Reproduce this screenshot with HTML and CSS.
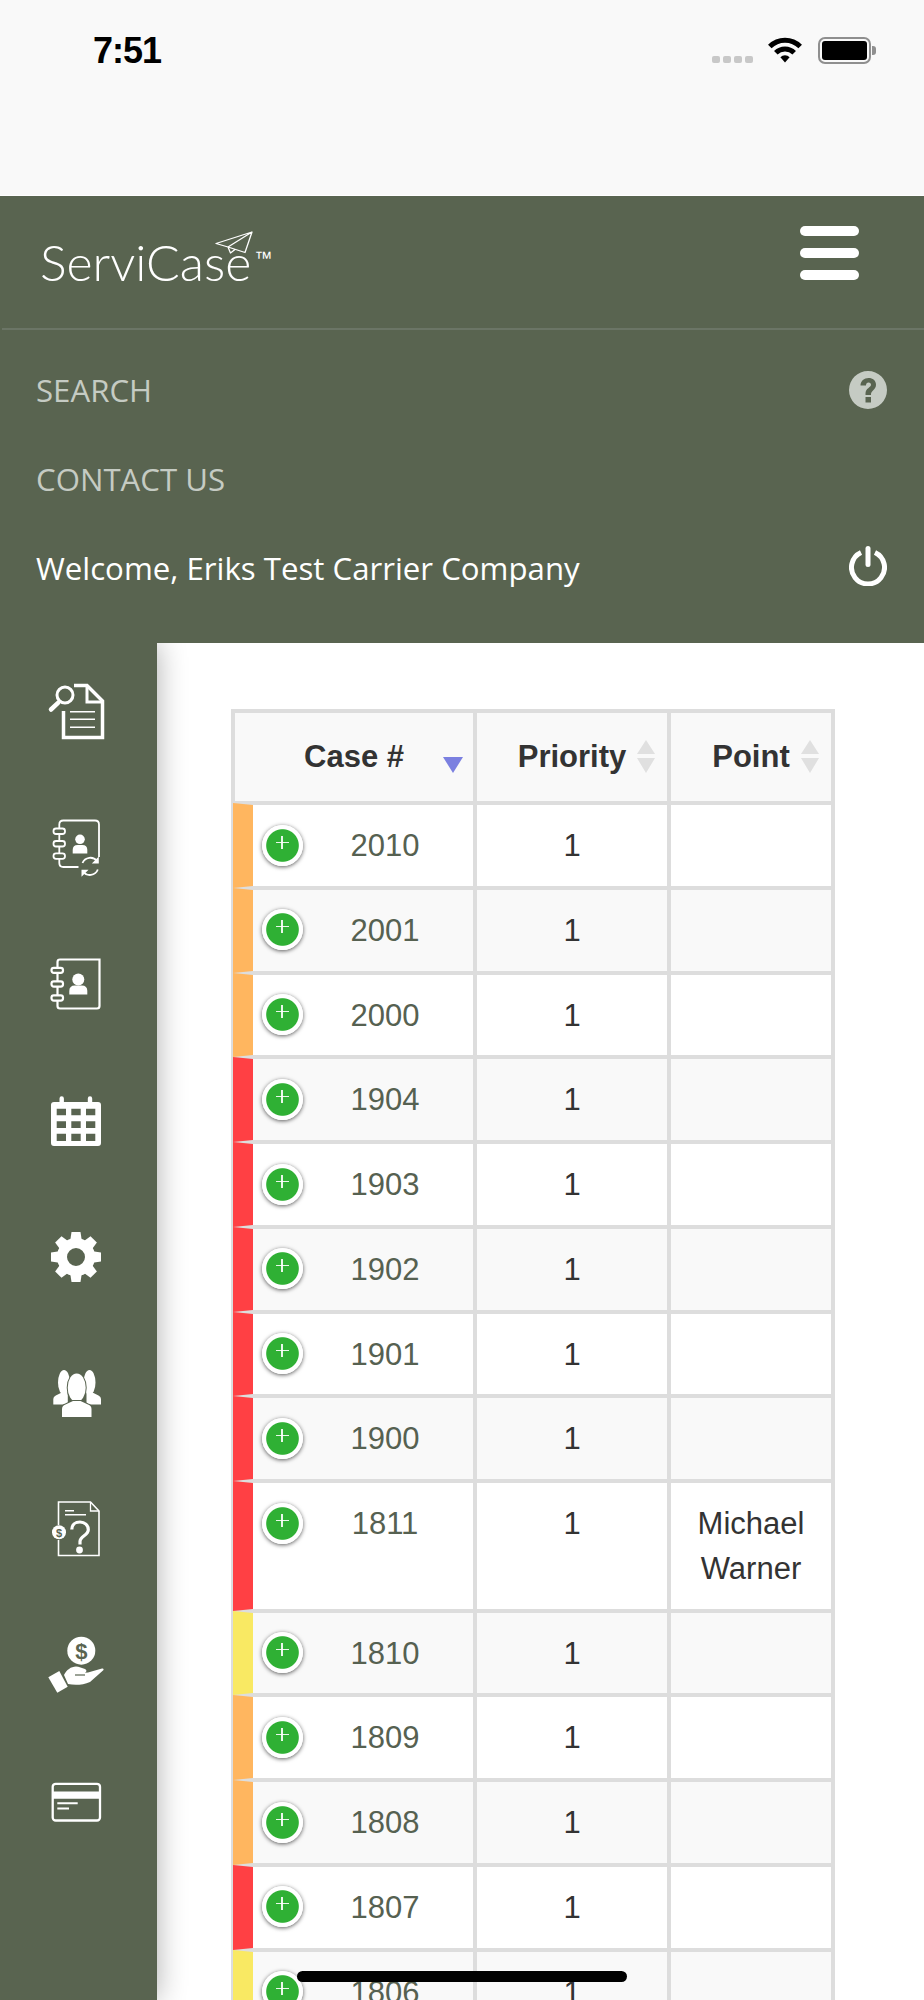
FILE: index.html
```html
<!DOCTYPE html>
<html lang="en">
<head>
<meta charset="utf-8">
<title>ServiCase</title>
<link rel="stylesheet" href="styles.css">
</head>
<body>
<div class="status">
  <span class="time">7:51</span>
  <div class="status-right">
    <div class="signal"><i></i><i></i><i></i><i></i></div>
    <svg class="wifi" viewBox="0 0 36 26"><path d="M2.800 9.600a21.500 21.500 0 0 1 30.400 0" fill="none" stroke="#000" stroke-width="5"/><path d="M8.800 15.800a13 13 0 0 1 18.400 0" fill="none" stroke="#000" stroke-width="5"/><path d="M13.400 20.200a6.500 6.500 0 0 1 9.200 0L18 25.500z" fill="#000"/></svg>
    <div class="battery"><div class="battery-fill"></div></div>
    <div class="battery-nub"></div>
  </div>
</div>

<header class="topbar">
  <div class="brand">
    <span class="logo">ServiCase</span><span class="tm">™</span>
    <svg class="plane" viewBox="0 0 38 23"><path d="M37 1 1 12.500l12 3.500 17 5.500zM37 1 13 16M13 16l2.500 6L20 18.500" fill="none" stroke="#fff" stroke-width="1.300" stroke-linejoin="round"/></svg>
  </div>
  <div class="burger"><i></i><i></i><i></i></div>
</header>
<div class="divider"></div>
<nav class="nav">
  <div class="nav-row muted"><span>SEARCH</span>
    <svg class="nav-icon" viewBox="0 0 38 38"><path fill-rule="evenodd" d="M19 0a19 19 0 1 1 0 38 19 19 0 0 1 0-38zM16.500 26v5.500h5.500v-5.500zM11.500 14.500h5.500c0-2 1-3 2.600-3 1.500 0 2.400 1 2.400 2.200 0 2.800-5.500 3.300-5.500 8.800v1.500h5.500v-1c0-3.300 5-4.300 5-9.300 0-4-3.300-6.700-7.400-6.700-4.500 0-8.100 3-8.100 7.500z" fill="#c5cbc3"/></svg>
  </div>
  <div class="nav-row muted"><span>CONTACT US</span></div>
  <div class="nav-row"><span>Welcome, Eriks Test Carrier Company</span>
    <svg class="nav-icon nav-power" viewBox="0 0 38 40"><path d="M12 6.500a16.500 16.500 0 1 0 14 0" fill="none" stroke="#fff" stroke-width="5"/><path d="M19 2.500v16" stroke="#fff" stroke-width="5" stroke-linecap="round"/></svg>
  </div>
</nav>

<div class="main">
  <aside class="sidebar">
    <div class="side-item"><svg class="side-icon" viewBox="0 0 60 60"><g fill="none" stroke="#fff"><path d="M28 3.500H41L56.500 19V55.500H17.500V29" stroke-width="3.500"/><path d="M41 3.500V20H56.500" stroke-width="3"/><path d="M24 29.700H49M24 37.300H49M24 45.300H49" stroke-width="1.600"/><circle cx="19" cy="13" r="8" stroke-width="3"/><path d="M12.300 20.700 5 27.500" stroke-width="4.500" stroke-linecap="round"/></g></svg></div>
    <div class="side-item"><svg class="side-icon" viewBox="0 0 60 60"><g fill="none" stroke="#fff" stroke-width="1.800"><path d="M13.300 10V6.500q0-4 4-4H49q4 0 4 4V39M13.300 41v4q0 4 4 4H32.500M13.300 16v7M13.300 28.500v7"/><rect x="7.500" y="10.500" width="11.500" height="5.500" rx="2.500"/><rect x="7.500" y="23" width="11.500" height="5.500" rx="2.500"/><rect x="7.500" y="35.300" width="11.500" height="5.500" rx="2.500"/><path d="M36.500 45a8.500 8.500 0 0 1 14.500-2M51.800 51.500a8.500 8.500 0 0 1-14.800 2"/></g><path d="M52.800 38.500v7h-7zM35.500 58.800v-7h7z" fill="#fff"/><circle cx="34" cy="21.300" r="4.800" fill="#fff"/><path d="M26.700 35.500v-3.500q0-5 5-5h4.600q5 0 5 5v3.500z" fill="#fff"/></svg></div>
    <div class="side-item"><svg class="side-icon" viewBox="0 0 60 60"><g fill="none" stroke="#fff" stroke-width="2.200"><path d="M11.500 13.500V8q0-2.500 2.500-2.500H53.500V52q0 2.500-2.500 2.500H14q-2.500 0-2.500-2.500V46.500M11.500 19v8M11.500 33v8"/><rect x="5.500" y="13.800" width="11.500" height="5" rx="2.300"/><rect x="5.500" y="27.300" width="11.500" height="5.300" rx="2.300"/><rect x="5.500" y="41.300" width="11.500" height="5.300" rx="2.300"/></g><circle cx="32.300" cy="25.500" r="6" fill="#fff"/><path d="M23.300 40.500v-3.500q0-5.500 5.500-5.500h7q5.500 0 5.500 5.500v3.500z" fill="#fff"/></svg></div>
    <div class="side-item"><svg class="side-icon" viewBox="0 0 60 60"><path fill="#fff" fill-rule="evenodd" d="M13.500 11V7.500a2.200 2.200 0 0 1 4.400 0V11H41.800V7.500a2.200 2.200 0 0 1 4.400 0V11H52a3 3 0 0 1 3 3V52a3 3 0 0 1-3 3H8a3 3 0 0 1-3-3V14a3 3 0 0 1 3-3zM10.700 17.700v6.600H20v-6.600zM25.300 17.700v6.600H34.700v-6.600zM40 17.700v6.600H49.300v-6.600zM10.700 30.300V37H20V30.300zM25.300 30.300V37H34.700V30.300zM40 30.300V37H49.300V30.300zM10.700 42.700V50H20V42.700zM25.300 42.700V50H34.700V42.700zM40 42.700V50H49.300V42.700z"/></svg></div>
    <div class="side-item"><svg class="side-icon" viewBox="0 0 60 60"><g fill="#fff"><path d="M25.500 5h9l1.500 10H24z"/><path d="M25.500 5h9l1.500 10H24z" transform="rotate(45 30 30)"/><path d="M25.500 5h9l1.500 10H24z" transform="rotate(90 30 30)"/><path d="M25.500 5h9l1.500 10H24z" transform="rotate(135 30 30)"/><path d="M25.500 5h9l1.500 10H24z" transform="rotate(180 30 30)"/><path d="M25.500 5h9l1.500 10H24z" transform="rotate(225 30 30)"/><path d="M25.500 5h9l1.500 10H24z" transform="rotate(270 30 30)"/><path d="M25.500 5h9l1.500 10H24z" transform="rotate(315 30 30)"/></g><circle cx="30" cy="30" r="14" fill="none" stroke="#fff" stroke-width="10"/></svg></div>
    <div class="side-item"><svg class="side-icon" viewBox="0 0 60 60"><g fill="#fff"><ellipse cx="18" cy="19.500" rx="6" ry="12.500"/><path d="M7.300 41.500V36q0-2.500 2.500-3.500l6-3h6v12z"/><ellipse cx="43.500" cy="19.500" rx="6" ry="12.500"/><path d="M55 41.500V36q0-2.500-2.500-3.500l-6-3h-6v12z"/></g><g fill="#fff" class="sep"><ellipse cx="30.700" cy="24.700" rx="9" ry="14.300"/><path d="M16 54V46q0-3.500 3.500-4.500l7.500-3.500h7.500l7.500 3.500q3.500 1 3.500 4.500v8z"/></g></svg></div>
    <div class="side-item"><svg class="side-icon" viewBox="0 0 60 60"><g fill="none" stroke="#fff"><path d="M12.500 26V3H44.500L53 12V56.500H12.500V41" stroke-width="1.600"/><path d="M44.500 3V12H53" stroke-width="1.300"/><path d="M19 11.700H28M19 15.700H40" stroke-width="1.500"/><path d="M25.800 30.500c0-4.800 3.600-7.500 8.200-7.500s8.300 3 8.300 7.800c0 5.700-8.300 6.200-8.300 11.700v3" stroke-width="3.200"/></g><circle cx="33.500" cy="51" r="3.400" fill="#fff"/><circle cx="13" cy="33.300" r="7" fill="#fff"/><text class="coin-s" x="13" y="37.500">$</text></svg></div>
    <div class="side-item"><svg class="side-icon" viewBox="0 0 60 60"><circle cx="35.300" cy="15.700" r="14" fill="#fff"/><text class="coin-l" x="35.300" y="23.500">$</text><path d="M2.300 42.300 13.300 36l8.400 15.700-10.400 6z" fill="#fff"/><path d="M18 40c2.500-5 7-8.500 12-8.500 3 0 6 1.500 9 2.500 2 1 2 3.200-.5 3.700L42 37.500l14-4c1.500-.5 2.200 1 1 2L44 47c-7 3-15 3.500-22 2z" fill="#fff"/><path d="M29 40H39" class="hand-line"/></svg></div>
    <div class="side-item"><svg class="side-icon" viewBox="0 0 60 60"><rect x="6.700" y="11.800" width="47.300" height="36.700" rx="3" fill="none" stroke="#fff" stroke-width="2.300"/><path d="M6 19.500H55V26.800H6z" fill="#fff"/><path d="M11.300 31.200H31.700M11.300 36.500H23" stroke="#fff" stroke-width="2"/></svg></div>
  </aside>

  <section class="content">
    <table class="cases">
      <colgroup><col class="col-case"><col class="col-prio"><col class="col-point"></colgroup>
      <thead>
        <tr>
          <th>Case #<span class="sort-active"></span></th>
          <th>Priority<span class="sort"></span></th>
          <th>Point<span class="sort"></span></th>
        </tr>
      </thead>
      <tbody>
        <tr><td class="case orange"><span class="expand"></span>2010</td><td>1</td><td></td></tr>
        <tr><td class="case orange"><span class="expand"></span>2001</td><td>1</td><td></td></tr>
        <tr><td class="case orange"><span class="expand"></span>2000</td><td>1</td><td></td></tr>
        <tr><td class="case red"><span class="expand"></span>1904</td><td>1</td><td></td></tr>
        <tr><td class="case red"><span class="expand"></span>1903</td><td>1</td><td></td></tr>
        <tr><td class="case red"><span class="expand"></span>1902</td><td>1</td><td></td></tr>
        <tr><td class="case red"><span class="expand"></span>1901</td><td>1</td><td></td></tr>
        <tr><td class="case red"><span class="expand"></span>1900</td><td>1</td><td></td></tr>
        <tr><td class="case red"><span class="expand"></span>1811</td><td>1</td><td>Michael Warner</td></tr>
        <tr><td class="case yellow"><span class="expand"></span>1810</td><td>1</td><td></td></tr>
        <tr><td class="case orange"><span class="expand"></span>1809</td><td>1</td><td></td></tr>
        <tr><td class="case orange"><span class="expand"></span>1808</td><td>1</td><td></td></tr>
        <tr><td class="case red"><span class="expand"></span>1807</td><td>1</td><td></td></tr>
        <tr><td class="case yellow"><span class="expand"></span>1806</td><td>1</td><td></td></tr>
      </tbody>
    </table>
  </section>
</div>
<div class="home-indicator"></div>
</body>
</html>
```
FILE: styles.css
```css
* { box-sizing: border-box; }
html, body { margin: 0; padding: 0; }
body {
  height: 2000px;
  overflow: hidden;
  position: relative;
  background: #fff;
  font-family: "Liberation Sans", Arial, sans-serif;
  color: #333;
}

/* status bar */
.status {
  height: 196px;
  background: #f9f9f9;
  border-bottom: 1px solid #fff;
  display: flex;
  justify-content: space-between;
  align-items: flex-start;
  padding: 31px 48px 0 93px;
}
.time {
  font-size: 36px;
  line-height: 40px;
  font-weight: 700;
  letter-spacing: -1px;
  color: #000;
}
.status-right { display: flex; align-items: flex-start; padding-top: 6px; }
.signal { display: flex; gap: 3px; margin-top: 19px; margin-right: 14px; }
.signal i { width: 8px; height: 7px; border-radius: 2px; background: #c8c8c8; display: block; }
.wifi { width: 36px; height: 26px; margin-right: 15px; display: block; }
.battery {
  width: 53px; height: 27px;
  border: 2px solid #8f8f8f;
  border-radius: 7px;
  padding: 2px;
  background: #f9f9f9;
}
.battery-fill { width: 100%; height: 100%; background: #000; border-radius: 3px; }
.battery-nub { width: 4px; height: 9px; margin-top: 9px; background: #8f8f8f; border-radius: 0 3px 3px 0; margin-left: 1px; }

/* top bar */
.topbar {
  height: 132px;
  background: #596450;
  display: flex;
  justify-content: space-between;
  align-items: flex-start;
  padding: 29px 65px 0 40px;
}
.brand { position: relative; display: flex; align-items: flex-start; padding-top: 8px; }
.logo {
  font-family: Lato, "Liberation Sans", sans-serif;
  font-weight: 300;
  font-size: 50px;
  line-height: 58px;
  color: #fff;
}
.tm { color: #fff; font-size: 18px; line-height: 18px; margin: 16px 0 0 3px; font-family: "Liberation Sans", sans-serif; }
.plane { position: absolute; left: 175px; top: 6px; width: 38px; height: 23px; }
.burger { display: flex; flex-direction: column; gap: 12px; padding-top: 1px; }
.burger i { display: block; width: 59px; height: 10px; border-radius: 5px; background: #fff; }
.divider { height: 2px; background: #6b7566; border-left: 2px solid #596450; }

/* nav */
.nav {
  height: 313px;
  background: #596450;
  padding: 15px 37px 0 36px;
}
.nav-row {
  height: 89px;
  display: flex;
  align-items: center;
  justify-content: space-between;
  font-family: "Open Sans", sans-serif;
  font-size: 31.200px;
  color: #fff;
}
.nav-row.muted { color: #c5cbc3; }
.nav-icon { width: 38px; height: 38px; display: block; }
.nav-power { height: 40px; margin-top: -4px; }

/* main */
.main { display: flex; height: 1357px; background: #596450; overflow: hidden; }
.sidebar {
  width: 157px;
  flex: none;
  background: #596450;
  position: relative;
  z-index: 1;
  box-shadow: 0 0 28px rgba(0, 0, 0, .32);
  padding: 1px 0 0 46px;
}
.side-item { height: 136.200px; display: flex; align-items: center; }
.side-icon { width: 60px; height: 60px; display: block; }
.coin-s { font: 700 11px "Liberation Sans", sans-serif; fill: #596450; text-anchor: middle; }
.coin-l { font: 700 22px "Liberation Sans", sans-serif; fill: #596450; text-anchor: middle; }
.sep { stroke: #596450; stroke-width: 2; paint-order: stroke; }
.hand-line { stroke: #596450; stroke-width: 1.200; fill: none; }

.content { flex: 1; background: #fff; padding: 66px 0 0 74px; overflow: hidden; }

/* table */
.cases {
  width: 604px;
  table-layout: fixed;
  border-collapse: separate;
  border-spacing: 0;
  border: 2px solid #ddd;
  font-size: 31px;
  line-height: 44.750px;
  background: #fff;
}
.col-case { width: 242px; }
.col-prio { width: 194px; }
.col-point { width: 164px; }
.cases th, .cases td { border: 2px solid #ddd; text-align: center; vertical-align: middle; }
.cases th {
  height: 92px;
  padding: 0;
  background: #f9f9f9;
  position: relative;
  font-weight: 700;
  color: #333;
}
.cases td { padding: 19px 6px 17px; vertical-align: top; }
.cases tbody tr:nth-child(even) td { background: #f9f9f9; }
.cases .case { position: relative; border-left-width: 20px; padding-left: 44px; padding-right: 0; color: #566151; }
.cases .orange { border-left-color: #ffb65f; }
.cases .red { border-left-color: #ff4044; }
.cases .yellow { border-left-color: #f9e963; }

.sort::before, .sort::after {
  content: "";
  position: absolute;
  right: 12px;
  border-left: 9px solid transparent;
  border-right: 9px solid transparent;
}
.sort::before { top: 27px; border-bottom: 14px solid #e0e0e0; }
.sort::after { top: 45px; border-top: 15px solid #e0e0e0; }
.sort-active {
  position: absolute;
  right: 10px;
  top: 44px;
  border-left: 10px solid transparent;
  border-right: 10px solid transparent;
  border-top: 16px solid #7b80e0;
}

.expand {
  position: absolute;
  left: 8.500px;
  top: 19.500px;
  width: 41px;
  height: 41px;
  border-radius: 50%;
  background: radial-gradient(circle at 50% 50%, #2fb034 0 15.800px, #fff 16.800px);
  box-shadow: 0 1px 4px rgba(0, 0, 0, .65);
}
.expand::before, .expand::after {
  content: "";
  position: absolute;
  background: rgba(255, 255, 255, .9);
}
.expand::before { left: 14px; top: 17px; width: 13px; height: 1.200px; }
.expand::after { left: 19.900px; top: 11px; width: 1.200px; height: 13px; }

.home-indicator {
  position: absolute;
  left: 297px;
  top: 1971px;
  width: 330px;
  height: 11px;
  border-radius: 6px;
  background: #000;
  z-index: 2;
}
```
